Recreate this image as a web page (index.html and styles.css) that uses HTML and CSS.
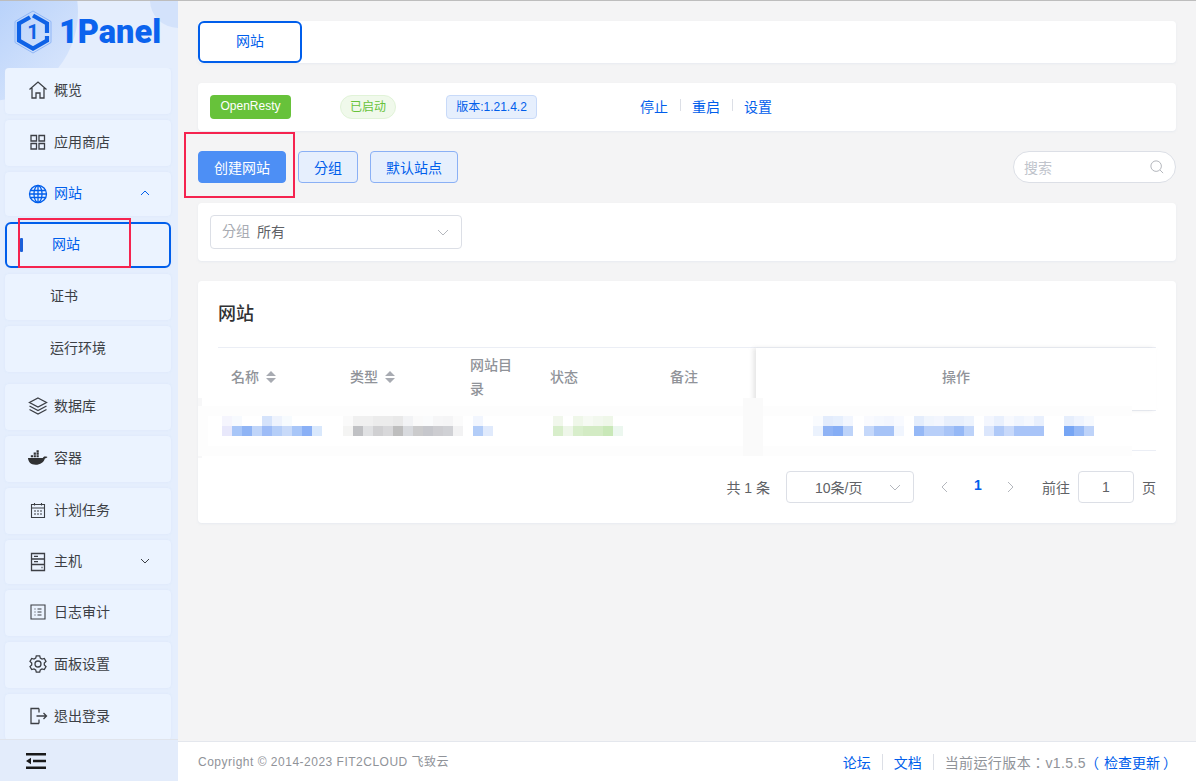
FILE: index.html
```html
<!DOCTYPE html>
<html lang="zh-TW">
<head>
<meta charset="utf-8">
<title>1Panel</title>
<link rel="stylesheet" href="styles.css">
</head>
<body>
<div class="app">
  <aside class="sidebar">
    <div class="blob blob-a"></div>
    <div class="blob blob-b"></div>
    <div class="logo">
      <svg class="logo-mark" viewBox="0 0 40 44" width="40" height="44">
        <path d="M20 1 38 11.500V32.500L20 43 2 32.500V11.500Z" fill="none" stroke="#8fb6f7" stroke-width="1"/>
        <path d="M20 5.500 34 13.500V23M34 26V30.500L20 38.500 6 30.500V13.500L17 7.200" fill="none" stroke="#0f62e6" stroke-width="4.200"/>
        <text x="20" y="29" text-anchor="middle" class="logo-one">1</text>
      </svg>
      <span class="logo-text">1Panel</span>
    </div>
    <nav class="menu">
      <a class="item"><svg class="ic" viewBox="0 0 20 20"><path d="M1.500 9.500 10 2l8.500 7.500M4 8v10h4v-5h4v5h4V8"/></svg>概览</a>
      <a class="item"><svg class="ic" viewBox="0 0 20 20"><path d="M3 3.500h5.500V9H3zM11 3.500h5.500V9H11zM3 11.500h5.500V17H3zM11 11.500h5.500V17H11z"/></svg>应用商店</a>
      <a class="item item-open active-text"><svg class="ic" viewBox="0 0 20 20"><circle cx="10" cy="10" r="8.500"/><ellipse cx="10" cy="10" rx="4" ry="8.500"/><path d="M10 1.500v17M2.500 6.500h15M1.500 10h17M2.500 13.500h15"/></svg>网站<svg class="chev" viewBox="0 0 12 12"><path d="M2 8l4-4 4 4"/></svg></a>
      <a class="item sub sub-active"><span class="marker"></span>网站</a>
      <a class="item sub">证书</a>
      <a class="item sub group-end">运行环境</a>
      <a class="item"><svg class="ic" viewBox="0 0 20 20"><path d="M10 2 18.500 6.500 10 11 1.500 6.500ZM1.500 10 10 14.500 18.500 10M1.500 13.500 10 18l8.500-4.500"/></svg>数据库</a>
      <a class="item"><svg class="ic ic-wide" viewBox="0 0 22 16"><path class="solid" d="M1 8h15.500c.6-1.500 2-2 2.800-1.500.8-.2 1.700-.1 2.200.5-.7 1-1.700 1.400-2.800 1.400C17.500 12.500 14 15 9 15 4 15 1.500 12.500 1 8Z"/><path class="solid" d="M4 5h2.300v2.300H4zM7 5h2.300v2.300H7zM10 5h2.300v2.300H10zM7 2.300h2.300v2.200H7zM10 2.300h2.300v2.200H10zM10 0h2.300v2H10z"/></svg>容器</a>
      <a class="item"><svg class="ic ic-thin" viewBox="0 0 20 20"><path d="M3.500 4.500h13v13h-13zM3.500 8h13M6.500 3v2.500M13.500 3v2.500M6 11h2M9 11h2M12 11h2M6 14h2M9 14h2M12 14h2"/></svg>计划任务</a>
      <a class="item item-open"><svg class="ic" viewBox="0 0 20 20"><path d="M3.500 1.500h13v17h-13zM3.500 7h13M3.500 12.500h13M6 4.300h4M6 9.700h4M13.500 15.500h1"/></svg>主机<svg class="chev chev-dark" viewBox="0 0 12 12"><path d="M2 4l4 4 4-4"/></svg></a>
      <a class="item"><svg class="ic ic-thin" viewBox="0 0 20 20"><path d="M3 3h14v14H3zM6.500 7h1M9.500 7h4M6.500 10h1M9.500 10h4M6.500 13h1M9.500 13h4"/></svg>日志审计</a>
      <a class="item"><svg class="ic" viewBox="0 0 20 20"><path d="M8.300 1.800h3.400l.6 2.300 1.700 1 2.300-.7 1.700 3-1.700 1.600v2l1.700 1.600-1.700 3-2.300-.7-1.700 1-.6 2.300H8.300l-.6-2.300-1.700-1-2.300.7-1.700-3L3.700 11V9L2 7.400l1.700-3 2.300.7 1.700-1Z"/><circle cx="10" cy="10" r="3"/></svg>面板设置</a>
      <a class="item"><svg class="ic" viewBox="0 0 20 20"><path d="M11 2.500H3v15h8M11 2.500v4M11 13.500v4M8.500 10h10M15.500 7l3 3-3 3"/></svg>退出登录</a>
    </nav>
    <div class="side-foot">
      <svg class="collapse" viewBox="0 0 20 18" width="20" height="18"><path d="M0 1h20v2.400H0zM7 7.800h13v2.400H7zM0 14.600h20V17H0zM0 9l5-3.200v6.400z"/></svg>
    </div>
  </aside>

  <div class="main">
    <div class="content">
      <div class="card tabs"><button class="tab">网站</button></div>

      <div class="card app-bar">
        <span class="tag tag-green">OpenResty</span>
        <span class="tag tag-run">已启动</span>
        <span class="tag tag-ver">版本:1.21.4.2</span>
        <div class="ops">
          <a class="link">停止</a><i class="sep"></i><a class="link">重启</a><i class="sep"></i><a class="link">设置</a>
        </div>
      </div>

      <div class="actions">
        <div class="highlight-wrap">
          <button class="btn btn-primary">创建网站</button>
          <span class="red-box red-box-a"></span>
        </div>
        <button class="btn btn-plain btn-s">分组</button>
        <button class="btn btn-plain">默认站点</button>
        <div class="search">
          <span class="search-ph">搜索</span>
          <svg class="search-ic" viewBox="0 0 16 16" width="14" height="14"><circle cx="7" cy="7" r="6"/><path d="M11.500 11.500 15 15"/></svg>
        </div>
      </div>

      <div class="card filter">
        <div class="select select-group">
          <span class="sel-prefix">分组</span><span class="sel-value">所有</span>
          <svg class="sel-chev" viewBox="0 0 12 12"><path d="M1 4l5 5 5-5"/></svg>
        </div>
      </div>

      <div class="card table-card">
        <h2 class="title">网站</h2>
        <div class="thead">
          <div class="th">名称<svg class="sort" viewBox="0 0 10 12"><path d="M5 0l5 5H0zM5 12 0 7h10z"/></svg></div>
          <div class="th">类型<svg class="sort" viewBox="0 0 10 12"><path d="M5 0l5 5H0zM5 12 0 7h10z"/></svg></div>
          <div class="th th-wrap">网站目录</div>
          <div class="th">状态</div>
          <div class="th">备注</div>
          <div class="th th-fixed">操作</div>
        </div>
        <div class="trow"></div>

        <svg class="redact" viewBox="0 0 978 60" width="978" height="60" shape-rendering="crispEdges">
          <rect x="0" y="0" width="4" height="60" fill="#f7f7f8"/>
          <rect x="0" y="8" width="934" height="50" fill="#fdfdfd"/>
          <rect x="10" y="18" width="924" height="30" fill="#ffffff"/>
          <rect x="545" y="0" width="20" height="58" fill="#fafafa"/>
          <g class="r1">
            <rect x="24" y="18" fill="#f5f5fd"/><rect x="34" y="18" fill="#f7fafe"/><rect x="64" y="18" fill="#d5e3fb"/><rect x="74" y="18" fill="#eef3fd"/><rect x="84" y="18" fill="#f7fbfe"/>
            <rect x="145" y="18" fill="#fafafa"/><rect x="155" y="18" fill="#f0f0f0"/><rect x="165" y="18" fill="#f0f0f0"/><rect x="175" y="18" fill="#ececec"/><rect x="185" y="18" fill="#ececec"/><rect x="195" y="18" fill="#e9e9e9"/><rect x="205" y="18" fill="#f2f3f5"/><rect x="215" y="18" fill="#fafafa"/><rect x="225" y="18" fill="#fafbfc"/><rect x="235" y="18" fill="#f6f6f7"/><rect x="245" y="18" fill="#f5f5f6"/><rect x="255" y="18" fill="#fbfbfb"/>
            <rect x="275" y="18" fill="#f2f6fe"/>
            <rect x="355" y="18" fill="#f1f7ec"/><rect x="375" y="18" fill="#eff7e9"/><rect x="385" y="18" fill="#f6faf3"/><rect x="395" y="18" fill="#f2f8ee"/><rect x="405" y="18" fill="#eff7e9"/>
            <rect x="615" y="18" fill="#f9fbfe"/><rect x="625" y="18" fill="#e3ecfc"/><rect x="635" y="18" fill="#e6effd"/><rect x="645" y="18" fill="#f2f6fe"/>
            <rect x="666" y="18" fill="#f9fafe"/><rect x="676" y="18" fill="#f5f8fe"/><rect x="686" y="18" fill="#f3f6fe"/><rect x="696" y="18" fill="#f8faff"/>
            <rect x="716" y="18" fill="#e4edfc"/><rect x="726" y="18" fill="#f0f5fd"/><rect x="736" y="18" fill="#f3f6fe"/><rect x="746" y="18" fill="#e8effc"/><rect x="756" y="18" fill="#e8effc"/><rect x="766" y="18" fill="#edf3fd"/>
            <rect x="786" y="18" fill="#f3f6fe"/><rect x="796" y="18" fill="#e9f0fd"/><rect x="806" y="18" fill="#f7f9fe"/><rect x="816" y="18" fill="#f0f5fe"/><rect x="826" y="18" fill="#f5f8fe"/><rect x="836" y="18" fill="#e9f0fd"/>
            <rect x="866" y="18" fill="#e6eefc"/><rect x="876" y="18" fill="#eff4fe"/><rect x="886" y="18" fill="#f6f9fe"/>
          </g>
          <g class="r1">
            <rect x="24" y="28" fill="#e8e8fb"/><rect x="34" y="28" fill="#a8c6f8"/><rect x="44" y="28" fill="#8fb4f5"/><rect x="54" y="28" fill="#c0d5f9"/><rect x="64" y="28" fill="#9dbcf7"/><rect x="74" y="28" fill="#b5cef8"/><rect x="84" y="28" fill="#c8daf9"/><rect x="94" y="28" fill="#a8c6f8"/><rect x="104" y="28" fill="#8ab0f6"/><rect x="114" y="28" fill="#d9e8fc"/>
            <rect x="145" y="28" fill="#f4f4f3"/><rect x="155" y="28" fill="#c0c1c4"/><rect x="165" y="28" fill="#e0e1e3"/><rect x="175" y="28" fill="#d0d0d2"/><rect x="185" y="28" fill="#d8d8da"/><rect x="195" y="28" fill="#bebebe"/><rect x="205" y="28" fill="#d8dade"/><rect x="215" y="28" fill="#cbcbcc"/><rect x="225" y="28" fill="#c6c7cc"/><rect x="235" y="28" fill="#cdcdd1"/><rect x="245" y="28" fill="#d0d1d5"/><rect x="255" y="28" fill="#f2f2f3"/>
            <rect x="275" y="28" fill="#b3cdf8"/><rect x="285" y="28" fill="#e0eafc"/>
            <rect x="355" y="28" fill="#d8eecb"/><rect x="365" y="28" fill="#eef6e9"/><rect x="375" y="28" fill="#d8eecb"/><rect x="385" y="28" fill="#d3ebc4"/><rect x="395" y="28" fill="#d3ebc4"/><rect x="405" y="28" fill="#c9e8b8"/><rect x="415" y="28" fill="#ecf7ef"/>
            <rect x="615" y="28" fill="#ebf2fd"/><rect x="625" y="28" fill="#8fb3f5"/><rect x="635" y="28" fill="#85adf5"/><rect x="645" y="28" fill="#bdd3f9"/>
            <rect x="666" y="28" fill="#c5d8fa"/><rect x="676" y="28" fill="#a6c3f7"/><rect x="686" y="28" fill="#a6c3f7"/><rect x="696" y="28" fill="#f0f5fe"/>
            <rect x="716" y="28" fill="#95b8f6"/><rect x="726" y="28" fill="#b8cff9"/><rect x="736" y="28" fill="#b8cff9"/><rect x="746" y="28" fill="#a8c4f7"/><rect x="756" y="28" fill="#95b8f6"/><rect x="766" y="28" fill="#bcd2f9"/>
            <rect x="786" y="28" fill="#dbe6fc"/><rect x="796" y="28" fill="#afc9f8"/><rect x="806" y="28" fill="#c8d9fa"/><rect x="816" y="28" fill="#a8c4f8"/><rect x="826" y="28" fill="#a8c4f8"/><rect x="836" y="28" fill="#a8c4f8"/>
            <rect x="866" y="28" fill="#76a5f4"/><rect x="876" y="28" fill="#96b9f6"/><rect x="886" y="28" fill="#bed3f9"/>
          </g>
        </svg>

        <div class="pager">
          <span class="total">共 1 条</span>
          <div class="select select-size"><span>10条/页</span><svg class="sel-chev" viewBox="0 0 12 12"><path d="M1 4l5 5 5-5"/></svg></div>
          <svg class="pg-arrow" viewBox="0 0 8 12"><path d="M6 1 1 6l5 5"/></svg>
          <span class="pg-num">1</span>
          <svg class="pg-arrow" viewBox="0 0 8 12"><path d="M2 1l5 5-5 5"/></svg>
          <span class="goto">前往</span>
          <div class="pg-input">1</div>
          <span class="page-unit">页</span>
        </div>
      </div>
    </div>

    <footer class="footer">
      <span class="copy">Copyright © 2014-2023 FIT2CLOUD 飞致云</span>
      <div class="foot-right">
        <a class="link">论坛</a><i class="fsep"></i><a class="link">文档</a><i class="fsep"></i>
        <span class="ver">当前运行版本：v1.5.5</span><a class="link check"><span class="par-l">（</span>检查更新<span class="par-r">）</span></a>
      </div>
    </footer>
  </div>
</div>
<span class="red-box red-box-b"></span>
</body>
</html>
```

FILE: styles.css
```css
* { box-sizing: border-box; }
html, body { margin: 0; height: 100%; overflow: hidden; }
body {
  font-family: "Liberation Sans", "Noto Sans CJK TC", "Noto Sans CJK SC", sans-serif;
  font-size: 14px;
  color: #303133;
  background: #f4f4f5;
  position: relative;
}
.app {
  display: flex;
  height: 781px;
  border-top: 1px solid #bdbdbd;
}

/* sidebar */
.sidebar {
  width: 178px;
  flex: none;
  display: flex;
  flex-direction: column;
  position: relative;
  overflow: hidden;
  background: #e5eefd;
}
.blob { position: absolute; border-radius: 50%; }
.blob-a {
  width: 178px; height: 178px; left: -100px; top: -78px;
  background: linear-gradient(135deg, #a5c6f9 25%, #d4e3fc 85%);
}
.blob-b {
  width: 56px; height: 56px; left: 150px; top: -29px;
  background: #d3e2fb;
}
.logo {
  position: relative;
  height: 67px;
  flex: none;
  display: flex;
  align-items: center;
  padding: 0 0 5px 13px;
  gap: 6px;
}
.logo-one { font: 700 20px "Roboto", sans-serif; fill: #0f62e6; }
.logo-text {
  font: 900 32.500px/1 "Roboto", sans-serif;
  color: #0b63ee;
}
.menu {
  position: relative;
  flex: 1;
  min-height: 0;
  overflow: hidden;
  display: flex;
  flex-direction: column;
  gap: 6px;
  padding: 0 7px 0 5px;
}
.item {
  flex: none;
  height: 46px;
  display: flex;
  align-items: center;
  padding: 0 0 4px 23px;
  gap: 6px;
  border-radius: 4px;
  background: #ebf3ff;
  color: #3c3f45;
  box-shadow: 0 0 2px rgba(210, 224, 248, .6);
}
.item-open { height: 44px; position: relative; }
.active-text { color: #005eeb; }
.ic {
  width: 20px; height: 20px; flex: none;
  margin-top: 2px;
  fill: none; stroke: currentColor; stroke-width: 1.300;
}
.item-open .ic { margin-top: 4px; }
.ic-thin { stroke-width: 1.100; }
.ic-wide { width: 21px; height: 16px; margin-left: -1px; stroke: none; }
.solid { fill: #303133; }
.chev {
  position: absolute; right: 20px; top: 15px;
  width: 12px; height: 12px;
  fill: none; stroke: #005eeb; stroke-width: 1;
}
.chev-dark { stroke: #3c3f45; }
.sub { padding-left: 45px; position: relative; }
.sub-active {
  background: #ebf3ff;
  border: 2px solid #005eeb;
  color: #005eeb;
  border-radius: 6px;
}
.group-end { margin-bottom: 6px; }
.marker {
  position: absolute; left: 13px; top: 14px;
  width: 3px; height: 14px;
  background: #1b5fd9; border-radius: 1px;
}
.side-foot {
  position: relative;
  flex: none;
  height: 42px;
  background: #e3ecfb;
  border-top: 1px solid #e0e4ec;
  display: flex;
  align-items: center;
  padding-left: 26px;
}
.collapse { fill: #1a1a1a; }

/* main */
.main { flex: 1; min-width: 0; display: flex; flex-direction: column; }
.content { flex: 1; padding: 20px 20px 0; display: flex; flex-direction: column; gap: 20px; }
.card {
  background: #fff;
  border-radius: 4px;
  box-shadow: 0 1px 2px rgba(220, 225, 235, .5);
}
.tabs { height: 42px; display: flex; }
.tab {
  width: 104px;
  border: 2px solid #005eeb;
  border-radius: 6px;
  background: #fff;
  color: #005eeb;
  font: inherit;
  padding: 0 0 4px;
}
.app-bar { height: 48px; display: flex; align-items: center; position: relative; padding-left: 12px; }
.tag {
  height: 24px;
  font-size: 12px;
  display: inline-flex;
  align-items: center;
  justify-content: center;
  border: 1px solid transparent;
  border-radius: 4px;
  padding-bottom: 3px;
}
.tag-green { width: 81px; background: #67c23a; color: #fff; }
.tag-run {
  width: 56px; margin-left: 49px;
  background: #f0f9eb; border-color: #e1f3d8; color: #67c23a; border-radius: 12px;
}
.tag-ver {
  width: 91px; margin-left: 50px;
  background: #e6effd; border-color: #c8daf9; color: #005eeb;
}
.ops { display: flex; align-items: center; margin-left: 103px; padding-bottom: 2px; }
.link { color: #005eeb; white-space: nowrap; }
.sep { width: 1px; height: 12px; background: #dcdfe6; margin: -3px 11.500px 0; }
.actions { display: flex; align-items: center; height: 32px; gap: 12px; }
.highlight-wrap { position: relative; display: flex; }
.btn {
  height: 32px;
  width: 88px;
  font: inherit;
  border-radius: 4px;
  border: 1px solid #8ab0f5;
  padding: 0;
}
.btn-s { width: 60px; }
.btn-primary { background: #4d8ff5; border-color: #4d8ff5; color: #fff; }
.btn-plain { background: #e6effd; color: #005eeb; }
.red-box {
  position: absolute;
  border: 2px solid #f5234f;
  pointer-events: none;
}
.red-box-a { left: -14px; top: -19px; width: 111px; height: 66px; }
.red-box-b { left: 18px; top: 218px; width: 113px; height: 50px; }
.search {
  margin-left: auto;
  width: 163px; height: 32px;
  background: #fff;
  border: 1px solid #dcdfe6;
  border-radius: 16px;
  display: flex;
  align-items: center;
  justify-content: space-between;
  padding: 0 11px 0 10px;
}
.search-ph { color: #c0c4cc; }
.search-ic { fill: none; stroke: #a8abb2; stroke-width: 1; }
.filter { height: 58px; padding: 12px; }
.select {
  background: #fff;
  border: 1px solid #dcdfe6;
  border-radius: 4px;
  display: flex;
  align-items: center;
  position: relative;
  color: #606266;
}
.select-group { width: 252px; height: 34px; padding-left: 11px; }
.sel-prefix { color: #a8abb2; margin-right: 7px; padding-bottom: 4px; }
.sel-value { padding-bottom: 2px; }
.sel-chev {
  position: absolute; right: 12px; top: 50%; margin-top: -6px;
  width: 12px; height: 12px;
  fill: none; stroke: #b4b7bd; stroke-width: 1;
}
.table-card { position: relative; padding: 0 20px 20px; height: 242px; }
.title {
  margin: 0;
  height: 67px;
  padding-top: 20px;
  font-size: 18px;
  font-weight: 500;
  line-height: 26px;
  color: #303133;
  border-bottom: 1px solid #ebeef5;
}
.thead {
  display: grid;
  grid-template-columns: 119px 120px 80px 120px 99px 1fr;
  height: 63px;
  border-bottom: 1px solid #ebeef5;
  align-items: center;
  color: #909399;
  font-weight: 500;
  line-height: 24px;
}
.th { padding: 0 0 4px 13px; display: flex; align-items: center; }
.th-wrap { padding-right: 19px; }
.th-fixed {
  height: 100%;
  justify-content: center;
  padding: 0 0 4px;
  background: #fff;
  box-shadow: -3px 0 4px rgba(190, 190, 190, .35);
}
.sort { width: 10px; height: 12px; margin-left: 7px; fill: #a8abb2; }
.trow { height: 40px; border-bottom: 1px solid #ebeef5; }
.redact { position: absolute; left: 0; top: 117px; }
.r1 rect { width: 10px; height: 10px; }
.pager {
  display: flex;
  align-items: center;
  justify-content: flex-end;
  height: 32px;
  margin-top: 20px;
  color: #606266;
}
.select-size { width: 128px; height: 32px; justify-content: flex-start; padding-left: 28px; margin-left: 16px; }
.pg-arrow { width: 8px; height: 12px; fill: none; stroke: #b4b7bd; stroke-width: 1; }
.select-size + .pg-arrow { margin-left: 27px; }
.pg-num { color: #005eeb; font-weight: 700; width: 10px; text-align: center; margin: -4px 23px 0 24px; font-size: 14px; }
.goto { margin-left: 28px; }
.pg-input {
  width: 56px; height: 32px; margin-left: 8px;
  border: 1px solid #dcdfe6; border-radius: 4px;
  display: flex; align-items: center; justify-content: center;
}
.page-unit { margin-left: 8px; }
.footer {
  flex: none;
  height: 40px;
  background: #fff;
  border-top: 1px solid #e4e7ed;
  display: flex;
  align-items: center;
  justify-content: space-between;
  padding: 0 22px 0 20px;
}
.copy { font-size: 12px; color: #909399; letter-spacing: .5px; padding-bottom: 2px; }
.foot-right { display: flex; align-items: center; }
.fsep { width: 1px; height: 16px; background: #dcdfe6; margin: 0 11px 0 11px; }
.ver { color: #909399; letter-spacing: .4px; }
.check { margin-left: 4px; }
.par-l { display: inline-block; margin: 0 5px 0 -5px; }
.par-r { display: inline-block; margin: 0 -3px 0 3px; }
```
